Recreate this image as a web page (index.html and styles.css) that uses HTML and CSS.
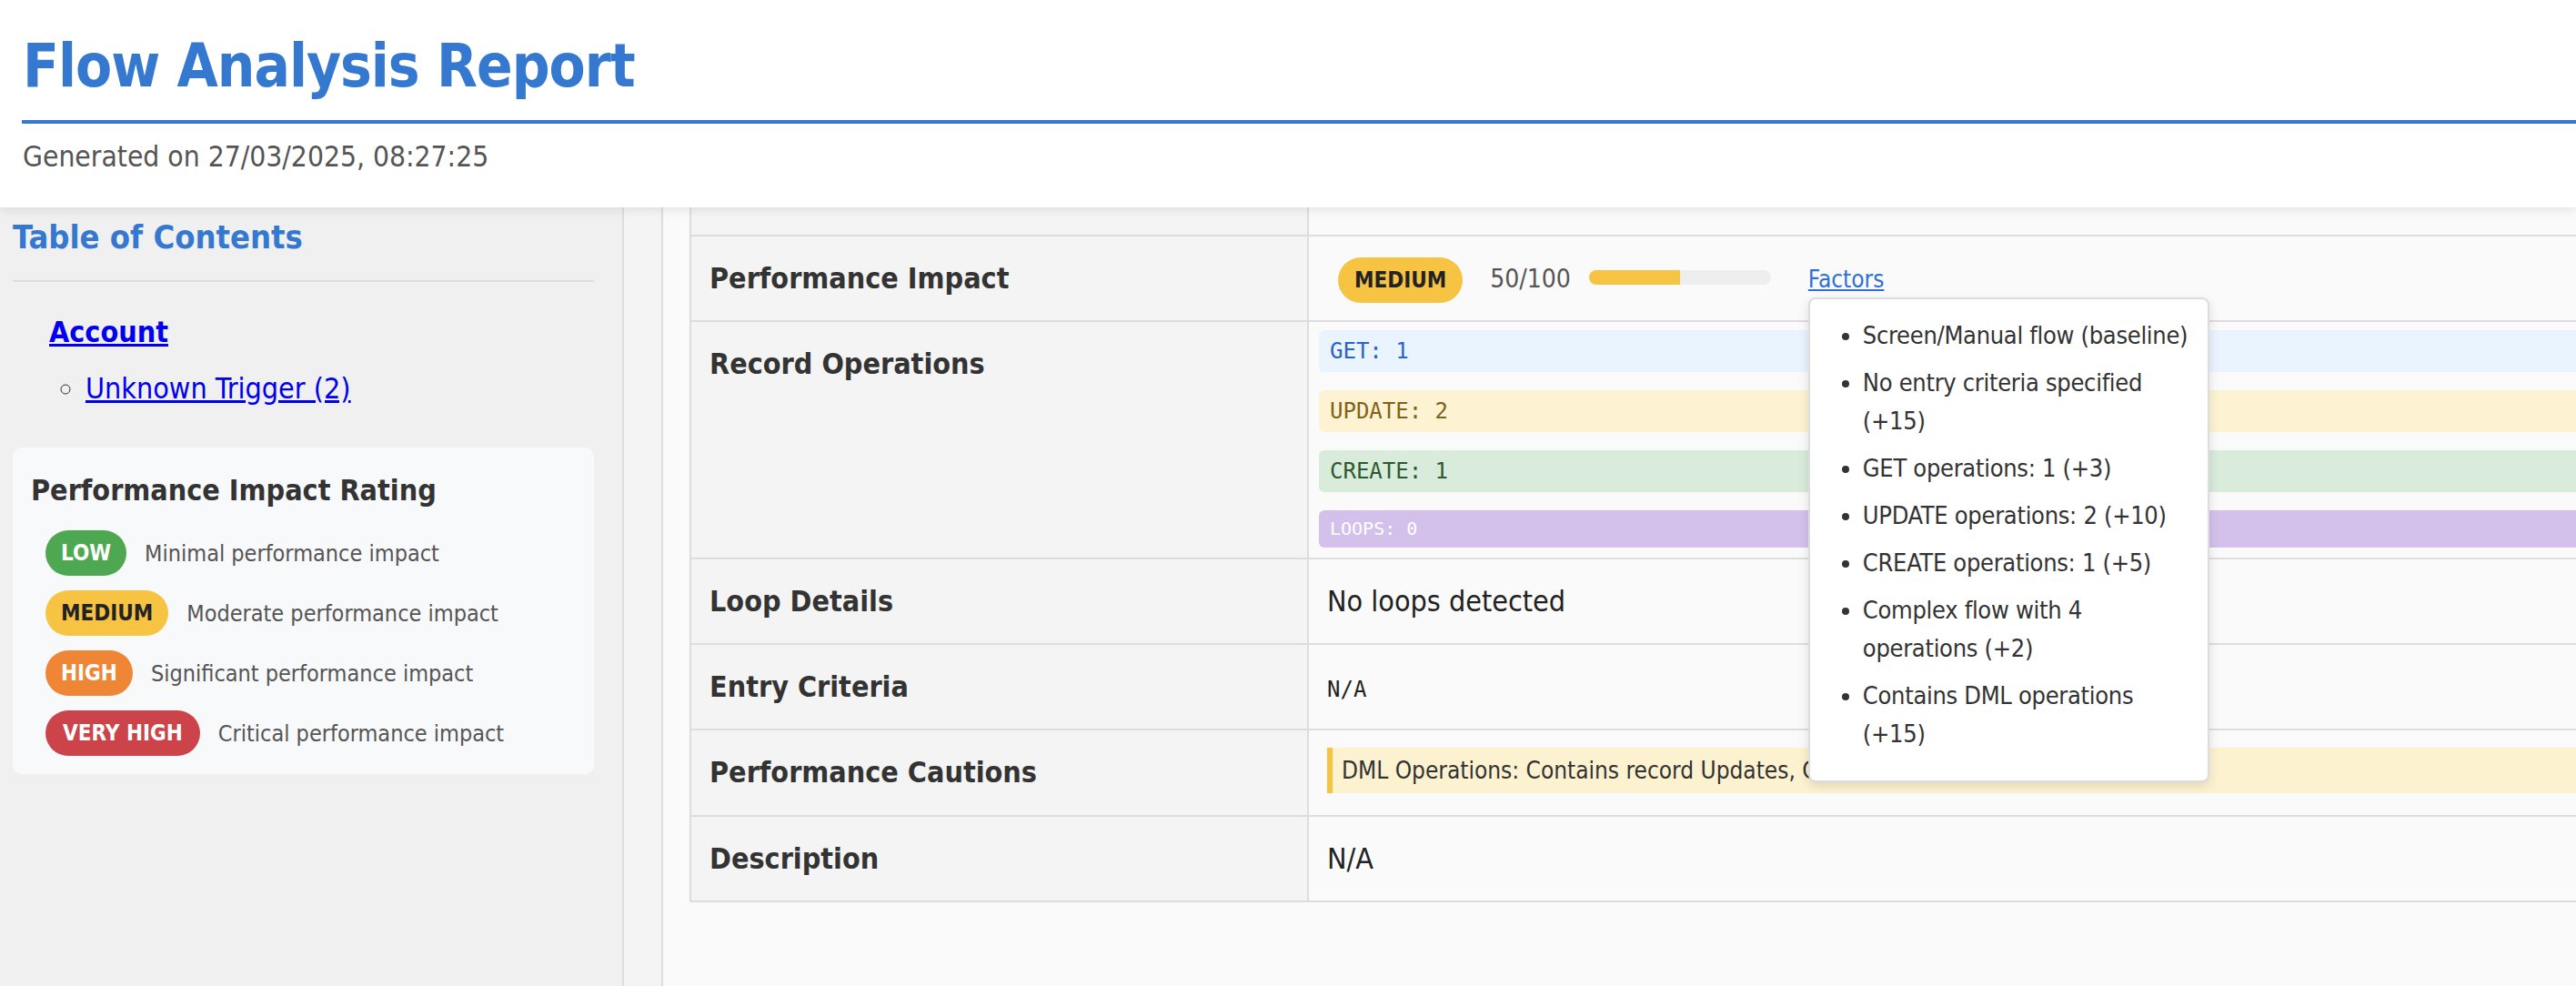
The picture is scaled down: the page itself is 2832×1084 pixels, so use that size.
FILE: index.html
```html
<!DOCTYPE html>
<html lang="en">
<head>
<meta charset="utf-8">
<title>Flow Analysis Report</title>
<link rel="stylesheet" href="styles.css">
</head>
<body>
<header class="page-header">
  <h1 class="title">Flow Analysis Report</h1>
  <p class="generated">Generated on 27/03/2025, 08:27:25</p>
</header>
<div class="layout">
  <aside class="sidebar">
    <h2 class="toc-title">Table of Contents</h2>
    <hr class="toc-rule">
    <ul class="toc-list">
      <li class="toc-object"><a href="#account">Account</a>
        <ul class="toc-sub">
          <li><a href="#unknown">Unknown Trigger (2)</a></li>
        </ul>
      </li>
    </ul>
    <div class="legend">
      <h3 class="legend-title">Performance Impact Rating</h3>
      <div class="legend-row"><span class="badge badge-low">LOW</span><span class="legend-text">Minimal performance impact</span></div>
      <div class="legend-row"><span class="badge badge-medium">MEDIUM</span><span class="legend-text">Moderate performance impact</span></div>
      <div class="legend-row"><span class="badge badge-high">HIGH</span><span class="legend-text">Significant performance impact</span></div>
      <div class="legend-row"><span class="badge badge-veryhigh">VERY HIGH</span><span class="legend-text">Critical performance impact</span></div>
    </div>
  </aside>
  <div class="divider"></div>
  <main class="main">
    <table class="flow-table">
      <colgroup><col class="col-label"><col class="col-value"></colgroup>
      <tr class="row-partial"><th></th><td></td></tr>
      <tr>
        <th>Performance Impact</th>
        <td class="impact-cell"><span class="impact-badge">MEDIUM</span><span class="score">50/100</span><span class="meter"><span class="meter-fill" style="width:50%"></span></span><span class="factors-wrap"><a href="#" class="factors">Factors</a>
          <div class="tooltip">
            <ul>
              <li>Screen/Manual flow (baseline)</li>
              <li>No entry criteria specified (+15)</li>
              <li>GET operations: 1 (+3)</li>
              <li>UPDATE operations: 2 (+10)</li>
              <li>CREATE operations: 1 (+5)</li>
              <li>Complex flow with 4 operations (+2)</li>
              <li>Contains DML operations (+15)</li>
            </ul>
          </div></span></td>
      </tr>
      <tr>
        <th>Record Operations</th>
        <td class="ops-cell">
          <div class="op op-get">GET: 1</div>
          <div class="op op-update">UPDATE: 2</div>
          <div class="op op-create">CREATE: 1</div>
          <div class="op op-loops">LOOPS: 0</div>
        </td>
      </tr>
      <tr>
        <th>Loop Details</th>
        <td class="plain">No loops detected</td>
      </tr>
      <tr>
        <th>Entry Criteria</th>
        <td><code class="mono">N/A</code></td>
      </tr>
      <tr>
        <th>Performance Cautions</th>
        <td class="caution-cell"><div class="caution">DML Operations: Contains record Updates, Contains record Creates</div></td>
      </tr>
      <tr>
        <th>Description</th>
        <td class="plain">N/A</td>
      </tr>
    </table>
  </main>
</div>
</body>
</html>
```
FILE: styles.css
```css
html, body {
  margin: 0;
  padding: 0;
}
body {
  width: 2832px;
  height: 1084px;
  overflow: hidden;
  background: #fafafa;
  font-family: "DejaVu Sans Condensed", "DejaVu Sans", sans-serif;
  color: #333;
}

.page-header {
  position: relative;
  z-index: 2;
  background: #fff;
  height: 228px;
  box-sizing: border-box;
  padding: 33px 0 0 24px;
  box-shadow: 0 4px 10px rgba(0, 0, 0, 0.08);
}
.title {
  margin: 0;
  font-size: 65px;
  line-height: 80px;
  letter-spacing: -1px;
  font-weight: bold;
  color: #3478d0;
  padding: 0 0 19px 1px;
  border-bottom: 4px solid #3478d0;
}
.generated {
  margin: 14px 0 0 1px;
  font-size: 31.5px;
  line-height: 44px;
  color: #555;
}

.layout {
  display: flex;
  height: 856px;
}
.sidebar {
  flex: none;
  box-sizing: border-box;
  width: 686px;
  background: #f0f0f0;
  border-right: 2px solid #ddd;
  padding: 11px 31px 0 14px;
}
.toc-title {
  margin: 0;
  font-size: 36px;
  line-height: 44px;
  font-weight: bold;
  color: #3478d0;
}
.toc-rule {
  margin: 25px 0 0 0;
  border: 0;
  border-top: 2px solid #ddd;
  height: 0;
}
.toc-list {
  margin: 33px 0 0 0;
  padding-left: 40px;
  list-style: none;
  font-size: 32px;
  line-height: 44px;
}
.toc-object > a {
  font-weight: bold;
  color: #0000ee;
}
.toc-sub {
  margin: 18px 0 0 0;
  padding-left: 40px;
  list-style: circle;
}
.toc-sub a {
  color: #0000ee;
}
.legend {
  margin-top: 43px;
  background: #f8f9fa;
  border-radius: 10px;
  padding: 25px 20px 20px 20px;
}
.legend-title {
  margin: 0 0 22px 0;
  font-size: 32px;
  line-height: 44px;
  font-weight: bold;
  color: #333;
}
.legend-row {
  display: flex;
  align-items: center;
  gap: 20px;
  margin: 0 0 16px 16px;
}
.legend-row:last-child {
  margin-bottom: 0;
}
.badge {
  display: inline-block;
  height: 50px;
  line-height: 50px;
  padding: 0 17px;
  border-radius: 25px;
  font-size: 24px;
  font-weight: bold;
  color: #fff;
}
.badge-veryhigh { padding: 0 19px; }
.badge-low { background: #4ea852; }
.badge-medium { background: #f6c343; color: #222; }
.badge-high { background: #ee8636; }
.badge-veryhigh { background: #cc434a; }
.legend-text {
  font-size: 25px;
  color: #555;
}

.divider {
  flex: none;
  width: 41px;
  background: #f4f4f4;
  border-right: 2px solid #ddd;
}

.main {
  flex: 1;
  min-width: 0;
  background: #fafafa;
  padding-left: 29px;
  overflow: hidden;
}
.flow-table {
  border-collapse: collapse;
  width: 2400px;
  table-layout: fixed;
  border-left: 2px solid #ddd;
  border-bottom: 2px solid #ddd;
}
.col-label { width: 679px; }
.flow-table th,
.flow-table td {
  border-top: 2px solid #ddd;
  border-right: 2px solid #ddd;
  padding: 24px 20px;
  vertical-align: top;
  text-align: left;
  font-size: 32px;
  line-height: 44px;
}
.flow-table th {
  background: #f4f4f4;
  font-weight: bold;
  color: #333;
}
.flow-table td {
  background: #fafafa;
  color: #222;
}
.flow-table .row-partial th,
.flow-table .row-partial td {
  border-top: 0;
  padding: 0;
  height: 30px;
}

.flow-table td.impact-cell {
  padding: 23px 20px 23px 20px;
}
.impact-badge {
  margin-left: 12px;
  padding: 11px 18px;
  border-radius: 26px;
  background: #f6c343;
  color: #222;
  font-size: 24px;
  line-height: 1;
  font-weight: bold;
}
.score {
  margin-left: 30px;
  font-size: 28px;
  line-height: 1;
  color: #555;
}
.meter {
  display: inline-block;
  vertical-align: middle;
  margin: -4px 0 0 20px;
  width: 200px;
  height: 16px;
  border-radius: 8px;
  background: #eeeeee;
  overflow: hidden;
}
.meter-fill {
  display: block;
  height: 100%;
  background: #f6c343;
}
.factors-wrap {
  position: relative;
  margin-left: 41px;
  line-height: 1;
}
.factors {
  font-size: 26px;
  color: #2f6fd6;
  text-decoration: underline;
}
.tooltip {
  position: absolute;
  left: 0;
  top: 41px;
  z-index: 5;
  width: 441px;
  box-sizing: border-box;
  background: #fff;
  border: 2px solid #ddd;
  border-radius: 8px;
  box-shadow: 0 4px 12px rgba(0, 0, 0, 0.12);
  padding: 19px 16px 20px 20px;
}
.tooltip ul {
  margin: 0;
  padding-left: 38px;
}
.tooltip li {
  font-size: 27px;
  line-height: 42px;
  letter-spacing: -0.3px;
  color: #333;
  margin-bottom: 10px;
}

.flow-table td.ops-cell {
  padding: 9px 0 11px 11px;
}
.op {
  height: 46px;
  line-height: 46px;
  padding: 0 12px;
  border-radius: 6px 0 0 6px;
  font-family: "DejaVu Sans Mono", monospace;
  font-size: 24px;
  margin-bottom: 20px;
}
.op-get { background: #eaf4fe; color: #2a62c9; }
.op-update { background: #fdf3d3; color: #7f6218; }
.op-create { background: #d9ebdb; color: #2b5a2e; }
.op-loops {
  background: #d3c1eb;
  color: #fff;
  height: 41px;
  line-height: 41px;
  font-size: 20px;
  margin-bottom: 0;
}
.mono {
  font-family: "DejaVu Sans Mono", monospace;
  font-size: 24px;
  line-height: 1;
  color: #222;
}
.flow-table td.caution-cell {
  padding: 19px 0 24px 20px;
}
.caution {
  height: 50px;
  line-height: 50px;
  box-sizing: border-box;
  border-left: 6px solid #f6c343;
  background: #fdf2d0;
  padding-left: 10px;
  font-size: 26px;
  color: #333;
}
```
